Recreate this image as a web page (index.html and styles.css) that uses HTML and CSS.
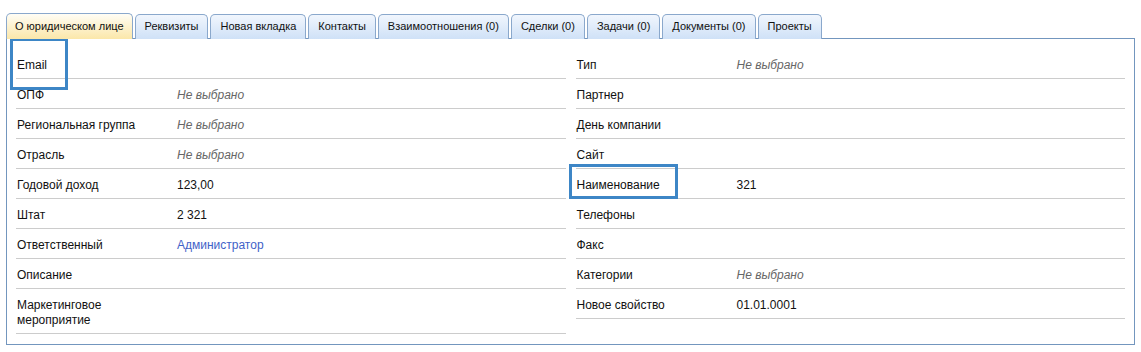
FILE: index.html
```html
<!DOCTYPE html>
<html lang="ru">
  <head>
    <meta charset="UTF-8" />
    <title>Юридическое лицо</title>
    <link rel="stylesheet" href="styles.css">
  </head>
  <body>
    <div class="tabs">
      <div class="tab active">О юридическом лице</div>
      <div class="tab">Реквизиты</div>
      <div class="tab">Новая вкладка</div>
      <div class="tab">Контакты</div>
      <div class="tab">Взаимоотношения (0)</div>
      <div class="tab">Сделки (0)</div>
      <div class="tab">Задачи (0)</div>
      <div class="tab">Документы (0)</div>
      <div class="tab">Проекты</div>
    </div>
    <div class="panel">
      <div class="column">
        <div class="row"><span class="label">Email</span></div>
        <div class="row"><span class="label">ОПФ</span><span class="value empty">Не выбрано</span></div>
        <div class="row"><span class="label">Региональная группа</span><span class="value empty">Не выбрано</span></div>
        <div class="row"><span class="label">Отрасль</span><span class="value empty">Не выбрано</span></div>
        <div class="row"><span class="label">Годовой доход</span><span class="value">123,00</span></div>
        <div class="row"><span class="label">Штат</span><span class="value">2 321</span></div>
        <div class="row"><span class="label">Ответственный</span><a href="#" class="value link">Администратор</a></div>
        <div class="row"><span class="label">Описание</span></div>
        <div class="row"><span class="label">Маркетинговое<br>мероприятие</span></div>
      </div>
      <div class="column">
        <div class="row"><span class="label">Тип</span><span class="value empty">Не выбрано</span></div>
        <div class="row"><span class="label">Партнер</span></div>
        <div class="row"><span class="label">День компании</span></div>
        <div class="row"><span class="label">Сайт</span></div>
        <div class="row"><span class="label">Наименование</span><span class="value">321</span></div>
        <div class="row"><span class="label">Телефоны</span></div>
        <div class="row"><span class="label">Факс</span></div>
        <div class="row"><span class="label">Категории</span><span class="value empty">Не выбрано</span></div>
        <div class="row"><span class="label">Новое свойство</span><span class="value">01.01.0001</span></div>
      </div>
    </div>
    <div class="mark mark-email"></div>
    <div class="mark mark-name"></div>
  </body>
</html>
```

FILE: styles.css
```css
body {
  font-family: "Liberation Sans", Arial, sans-serif;
  margin: 0;
  padding: 0;
  background-color: #ffffff;
  color: #111111;
  position: relative;
}
.tabs {
  display: flex;
  gap: 2px;
  padding: 13px 0 0 6px;
}
.tab {
  height: 25px;
  line-height: 23px;
  padding: 0 9px;
  font-size: 11px;
  border: 1px solid #8aa8cc;
  border-bottom: none;
  border-radius: 5px 5px 0 0;
  background: linear-gradient(#f1f6fd, #cfe1f7);
  color: #111111;
  box-sizing: border-box;
  margin-top: 1px;
  margin-bottom: -1px;
  position: relative;
}
.tab.active {
  background: linear-gradient(#fffdf5, #fbe7a9);
  z-index: 1;
  height: 26px;
  margin-top: 0;
  padding: 1px 8px 0;
}
.panel {
  margin: 0 6px;
  border: 1px solid #7396be;
  padding: 10px 9px 10px 9px;
  display: grid;
  grid-template-columns: 1fr 1fr;
  gap: 10px;
  font-size: 12px;
}
.row {
  display: flex;
  align-items: flex-start;
  padding: 9px 0 5px;
  line-height: 15px;
  border-bottom: 1px solid #cccccc;
}
.label {
  width: 160px;
  flex-shrink: 0;
  padding-left: 1px;
}
.value.empty {
  color: #666666;
  font-style: italic;
}
.value.link {
  color: #3f62c8;
  text-decoration: none;
}
.mark {
  position: absolute;
  border: 3px solid #3d86c6;
  box-sizing: border-box;
}
.mark-email {
  left: 10px;
  top: 38px;
  width: 58px;
  height: 52px;
}
.mark-name {
  left: 569px;
  top: 164px;
  width: 109px;
  height: 35px;
}
```
